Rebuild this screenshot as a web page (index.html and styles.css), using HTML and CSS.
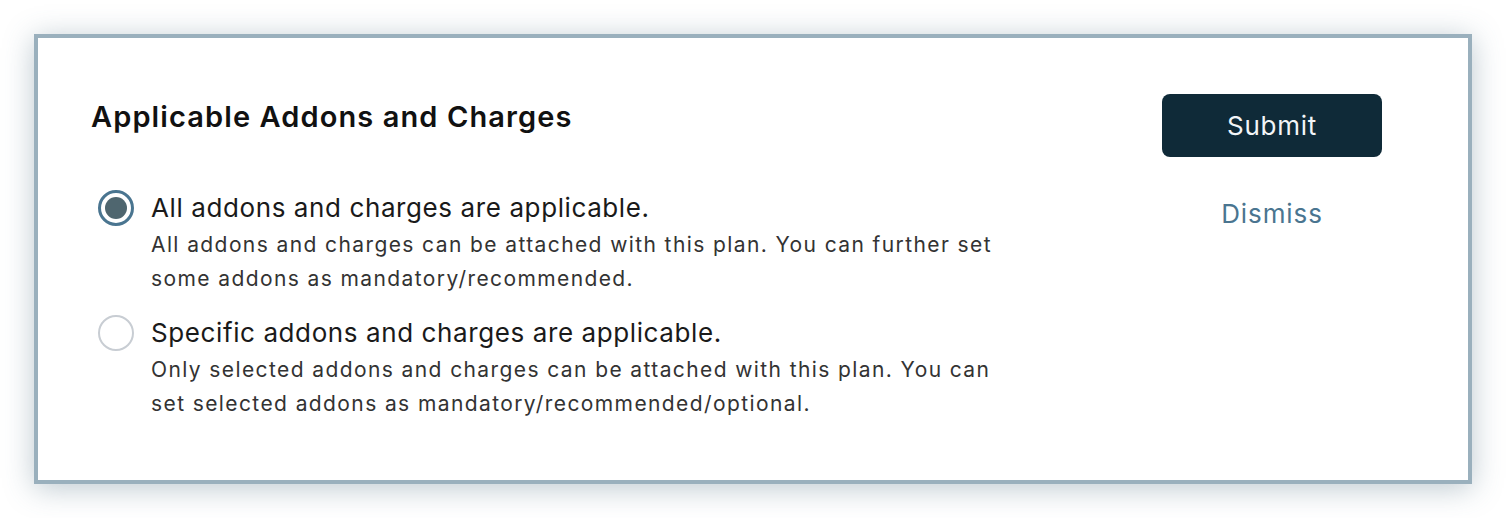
FILE: index.html
```html
<html>
<head>
<meta charset="UTF-8" />
<title>Applicable Addons and Charges</title>
<link rel="stylesheet" href="styles.css">
</head>
<body>
<div class="card">
  <div class="content">
    <h2 class="title">Applicable Addons and Charges</h2>
    <label class="option">
      <span class="radio checked"></span>
      <span class="option-text">
        <span class="option-label">All addons and charges are applicable.</span>
        <span class="option-desc">All addons and charges can be attached with this plan. You can further set some addons as mandatory/recommended.</span>
      </span>
    </label>
    <label class="option">
      <span class="radio"></span>
      <span class="option-text">
        <span class="option-label">Specific addons and charges are applicable.</span>
        <span class="option-desc">Only selected addons and charges can be attached with this plan. You can set selected addons as mandatory/recommended/optional.</span>
      </span>
    </label>
  </div>
  <div class="actions">
    <button class="btn-submit" type="button">Submit</button>
    <a class="btn-dismiss" href="#">Dismiss</a>
  </div>
</div>
</body>
</html>
```

FILE: styles.css
```css
body {
  margin: 0;
  padding: 34px;
  background: #fff;
  font-family: Inter, 'Noto Sans', sans-serif;
  color: #1a1a1a;
}

.card {
  display: flex;
  justify-content: space-between;
  height: 450px;
  box-sizing: border-box;
  border: 4px solid #9ab0bd;
  background: #fff;
  box-shadow: 0 4px 28px rgba(80, 110, 130, 0.38);
  padding: 56px 86px 0 53px;
}

.content {
  width: 920px;
  padding-top: 3px;
}

.title {
  margin: 0 0 51px;
  font-size: 29px;
  font-weight: 600;
  line-height: 40px;
  letter-spacing: 1.1px;
  color: #111;
}

.option {
  display: flex;
  gap: 17px;
  margin-bottom: 17px;
  cursor: pointer;
}

.radio {
  flex: none;
  width: 36px;
  height: 36px;
  margin: 2px 0 0 7px;
  box-sizing: border-box;
  border: 2px solid #c8cdd3;
  border-radius: 50%;
  display: flex;
  align-items: center;
  justify-content: center;
}

.radio.checked {
  border: 3px solid #4a7590;
}

.radio.checked::after {
  content: '';
  width: 22px;
  height: 22px;
  border-radius: 50%;
  background: #4f666f;
}

.option-text {
  display: flex;
  flex-direction: column;
}

.option-label {
  font-size: 26px;
  line-height: 40px;
  letter-spacing: 0.6px;
  color: #1a1a1a;
}

.option-desc {
  font-size: 21px;
  line-height: 34px;
  letter-spacing: 1.4px;
  color: #333;
  max-width: 855px;
}

.actions {
  display: flex;
  flex-direction: column;
  align-items: center;
  gap: 41px;
}

.btn-submit {
  width: 220px;
  height: 63px;
  border: none;
  border-radius: 8px;
  background: #0f2a38;
  color: #f2f5f7;
  font-family: inherit;
  font-size: 26px;
  letter-spacing: 0.75px;
  cursor: pointer;
}

.btn-dismiss {
  font-size: 26px;
  line-height: 32px;
  letter-spacing: 0.9px;
  color: #4a7590;
  text-decoration: none;
}
```
